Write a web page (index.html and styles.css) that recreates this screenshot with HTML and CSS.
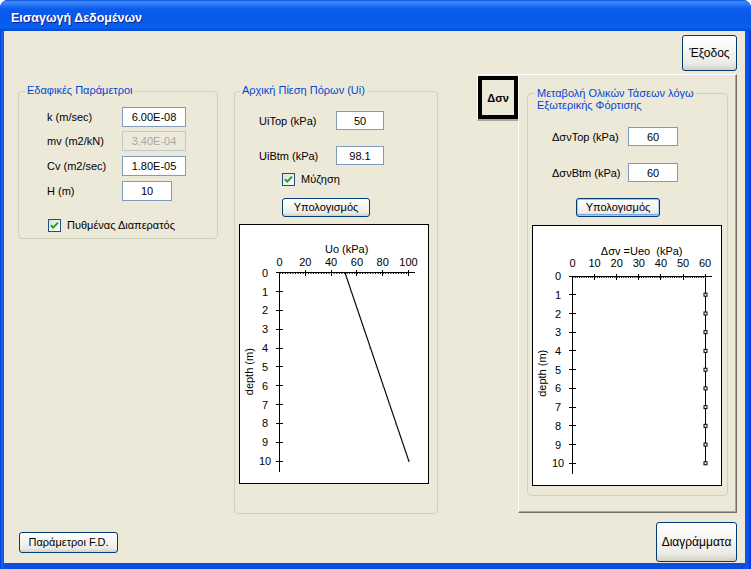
FILE: index.html
```html
<!DOCTYPE html>
<html lang="el">
<head>
<meta charset="utf-8">
<title>Εισαγωγή Δεδομένων</title>
<link rel="stylesheet" href="styles.css">
</head>
<body>
<div class="window">
  <div class="titlebar"><span class="title">Εισαγωγή Δεδομένων</span></div>
  <div class="client">

    <div class="col col1">
      <div class="group g1">
        <span class="legend">Εδαφικές Παράμετροι</span>
        <div class="frow"><span class="lbl">k (m/sec)</span><input class="inp w64" type="text" value="6.00E-08"></div>
        <div class="frow mt4"><span class="lbl">mv (m2/kN)</span><input class="inp w64" type="text" value="3.40E-04" disabled></div>
        <div class="frow mt5"><span class="lbl">Cv (m2/sec)</span><input class="inp w64" type="text" value="1.80E-05"></div>
        <div class="frow mt5"><span class="lbl">H (m)</span><input class="inp w50" type="text" value="10"></div>
        <label class="check c1"><span class="cb"><svg width="13" height="13" viewBox="0 0 13 13"><defs><linearGradient id="cbg" x1="0" y1="0" x2="1" y2="1"><stop offset="0" stop-color="#DCDCD7"/><stop offset="1" stop-color="#FFFFFF"/></linearGradient></defs><rect x="0.5" y="0.5" width="12" height="12" fill="url(#cbg)" stroke="#1C5180"/><path d="M3 6.2l2.2 2.4L10 3.6" fill="none" stroke="#21A121" stroke-width="2"/></svg></span>Πυθμένας Διαπερατός</label>
      </div>
      <button class="btn fd">Παράμετροι F.D.</button>
    </div>

    <div class="col col2">
      <div class="group g2">
        <span class="legend">Αρχική Πίεση Πόρων (Ui)</span>
        <div class="frow"><span class="lbl">UiTop (kPa)</span><input class="inp w48" type="text" value="50"></div>
        <div class="frow mt16"><span class="lbl">UiBtm (kPa)</span><input class="inp w48" type="text" value="98.1"></div>
        <label class="check c2"><span class="cb"><svg width="13" height="13" viewBox="0 0 13 13"><rect x="0.5" y="0.5" width="12" height="12" fill="url(#cbg)" stroke="#1C5180"/><path d="M3 6.2l2.2 2.4L10 3.6" fill="none" stroke="#21A121" stroke-width="2"/></svg></span>Μύζηση</label>
        <button class="btn calc calc1">Υπολογισμός</button>
        <svg class="chart chart1" width="188" height="258" viewBox="0 0 188 258">
          <text x="106.7" y="28" text-anchor="middle">Uo (kPa)</text>
          <g text-anchor="middle">
            <text x="39.5" y="40.7">0</text>
            <text x="65.3" y="40.7">20</text>
            <text x="91.1" y="40.7">40</text>
            <text x="116.9" y="40.7">60</text>
            <text x="142.7" y="40.7">80</text>
            <text x="168.5" y="40.7">100</text>
          </g>
          <g text-anchor="middle">
            <text x="25" y="51.7">0</text>
            <text x="25" y="70.5">1</text>
            <text x="25" y="89.4">2</text>
            <text x="25" y="108.2">3</text>
            <text x="25" y="127">4</text>
            <text x="25" y="145.9">5</text>
            <text x="25" y="164.7">6</text>
            <text x="25" y="183.5">7</text>
            <text x="25" y="202.3">8</text>
            <text x="25" y="221.2">9</text>
            <text x="25" y="240">10</text>
          </g>
          <text transform="translate(13 146.7) rotate(-90)" text-anchor="middle">depth (m)</text>
          <path class="ax" d="M39 47.5H175M39.5 47V247M65.5 45V51M91.5 45V51M116.5 45V51M142.5 45V51M168.5 45V51M36 47.5H43M36 66.5H43M36 85.5H43M36 104.5H43M36 123.5H43M36 141.5H43M36 160.5H43M36 179.5H43M36 198.5H43M36 217.5H43M36 236.5H43"/>
          <line class="minor" x1="39.5" y1="48.5" x2="168.5" y2="48.5" stroke-dasharray="1 1.58"/>
          <path class="data" d="M105 47.7L169 236.5"/>
          <path class="mark" d="M110.4 65.6l1.6 1.6m0-1.6l-1.6 1.6M116.8 84.5l1.6 1.6m0-1.6l-1.6 1.6M123.2 103.4l1.6 1.6m0-1.6l-1.6 1.6M129.6 122.2l1.6 1.6m0-1.6l-1.6 1.6M136 141.1l1.6 1.6m0-1.6l-1.6 1.6M142.4 160l1.6 1.6m0-1.6l-1.6 1.6M148.8 178.9l1.6 1.6m0-1.6l-1.6 1.6M155.2 197.8l1.6 1.6m0-1.6l-1.6 1.6M161.6 216.6l1.6 1.6m0-1.6l-1.6 1.6M168 235.5l1.6 1.6m0-1.6l-1.6 1.6"/>
        </svg>
      </div>
    </div>

    <div class="col col3">
      <button class="btn big exit">Έξοδος</button>
      <div class="tabrow">
        <div class="tab"><div class="dsbox">Δσν</div></div>
        <div class="panel">
          <div class="group g3">
            <span class="legend l3">Μεταβολή Ολικών Τάσεων λόγω<br>Εξωτερικής Φόρτισης</span>
            <div class="frow"><span class="lbl">ΔσνTop (kPa)</span><input class="inp w50" type="text" value="60"></div>
            <div class="frow mt17"><span class="lbl">ΔσνBtm (kPa)</span><input class="inp w50" type="text" value="60"></div>
            <button class="btn calc calc2">Υπολογισμός</button>
            <svg class="chart chart2" width="188" height="259" viewBox="0 0 188 259">
              <text x="108.7" y="28.7" text-anchor="middle" xml:space="preserve">Δσv =Ueo  (kPa)</text>
              <g text-anchor="middle">
                <text x="39.5" y="41.3">0</text>
                <text x="61.6" y="41.3">10</text>
                <text x="83.7" y="41.3">20</text>
                <text x="105.8" y="41.3">30</text>
                <text x="127.9" y="41.3">40</text>
                <text x="150" y="41.3">50</text>
                <text x="172.1" y="41.3">60</text>
              </g>
              <g text-anchor="middle">
                <text x="25" y="54">0</text>
                <text x="25" y="72.7">1</text>
                <text x="25" y="91.5">2</text>
                <text x="25" y="110.2">3</text>
                <text x="25" y="128.9">4</text>
                <text x="25" y="147.7">5</text>
                <text x="25" y="166.4">6</text>
                <text x="25" y="185.1">7</text>
                <text x="25" y="203.8">8</text>
                <text x="25" y="222.6">9</text>
                <text x="25" y="241.3">10</text>
              </g>
              <text transform="translate(12.7 147.3) rotate(-90)" text-anchor="middle">depth (m)</text>
              <path class="ax" d="M39 50.5H179M39.5 50V248M61.5 48V54M83.5 48V54M105.5 48V54M127.5 48V54M150.5 48V54M172.5 48V54M36 50.5H43M36 68.5H43M36 87.5H43M36 106.5H43M36 124.5H43M36 143.5H43M36 162.5H43M36 181.5H43M36 199.5H43M36 218.5H43M36 237.5H43"/>
              <line class="minor" x1="39.5" y1="51.5" x2="172.5" y2="51.5" stroke-dasharray="1 1.21"/>
              <path class="data2" d="M172.5 50V237.5"/>
              <g class="sq">
                <rect x="171" y="67.2" width="3" height="3"/>
                <rect x="171" y="86" width="3" height="3"/>
                <rect x="171" y="104.7" width="3" height="3"/>
                <rect x="171" y="123.4" width="3" height="3"/>
                <rect x="171" y="142.2" width="3" height="3"/>
                <rect x="171" y="160.9" width="3" height="3"/>
                <rect x="171" y="179.6" width="3" height="3"/>
                <rect x="171" y="198.3" width="3" height="3"/>
                <rect x="171" y="217.1" width="3" height="3"/>
                <rect x="171" y="235.8" width="3" height="3"/>
              </g>
            </svg>
          </div>
        </div>
      </div>
      <button class="btn big diag">Διαγράμματα</button>
    </div>

  </div>
</div>
</body>
</html>
```
FILE: styles.css
```css
* { box-sizing: border-box; }
html, body { margin: 0; padding: 0; background: #ffffff; }
body {
  font-family: "Liberation Sans", Arial, sans-serif;
  font-size: 11px;
  color: #000;
}

.window {
  width: 751px;
  height: 569px;
  background: linear-gradient(to right, #0831D9 0, #166AEE 2px, #0A4FE0 4px, #0A4FE0 745px, #0A5BEF 747px, #0831D9 751px);
  border-radius: 8px 8px 0 0;
  display: flex;
  flex-direction: column;
  overflow: hidden;
}

.titlebar {
  height: 31px;
  flex: none;
  padding: 11px 0 0 11px;
  background: linear-gradient(to bottom, #0A52E0 0, #3C8DF8 2px, #2F7CF5 4px, #0C5BEC 9px, #0558E8 20px, #0A60EE 27px, #0049D4 31px);
}
.title {
  display: block;
  color: #fff;
  font-weight: bold;
  font-size: 12.5px;
  line-height: 15px;
  text-shadow: 1px 1px 0 #0F1E8C;
}

.client {
  flex: none;
  width: 741px;
  height: 532px;
  margin-left: 4px;
  background: #ECE9D8;
  display: flex;
}

.col { display: flex; flex-direction: column; }
.col1 { width: 200px; margin-left: 14px; }
.col2 { width: 204px; margin-left: 16px; }
.col3 { width: 260px; margin-left: 39px; }

.group {
  position: relative;
  border: 1px solid #D0D0BF;
  border-radius: 4px;
  display: flex;
  flex-direction: column;
  align-items: flex-start;
}
.legend {
  position: absolute;
  top: -8px;
  left: 6px;
  padding: 0 2px;
  background: #ECE9D8;
  color: #0046D5;
  line-height: 13px;
  white-space: nowrap;
}

.g1 { margin-top: 60px; height: 148px; padding: 15px 0 0 28px; }
.g2 { margin-top: 60px; height: 423px; padding: 19px 0 0 24px; }
.g2 .legend { left: 5px; }
.g3 { margin: 18px 0 0 8px; width: 201px; height: 403px; padding: 33px 0 0 24px; }
.l3 { top: -7px; left: 7px; line-height: 12px; }

.frow { display: flex; align-items: center; }
.g1 .lbl { width: 75px; }
.g2 .lbl { width: 77px; }
.g3 .lbl { width: 76px; }
.mt4 { margin-top: 4px; }
.mt5 { margin-top: 5px; }
.mt16 { margin-top: 16px; }
.mt17 { margin-top: 17px; }

.inp {
  height: 20px;
  border: 1px solid #7F9DB9;
  background: #fff;
  font-family: "Liberation Sans", Arial, sans-serif;
  font-size: 11px;
  color: #000;
  text-align: center;
  padding: 0;
  margin: 0;
  outline: none;
}
.g2 .inp, .g3 .inp { height: 19px; }
.inp:disabled { background: #EBEADB; color: #ACA899; border-color: #C2C7CF; }
.w64 { width: 64px; }
.w50 { width: 50px; }
.w48 { width: 48px; }

.check { display: flex; align-items: center; line-height: 13px; }
.cb { display: block; width: 13px; height: 13px; margin-right: 6px; }
.cb svg { display: block; }
.c1 { margin: 18px 0 0 1px; }
.c2 { margin: 8px 0 0 23px; }

.btn {
  font-family: "Liberation Sans", Arial, sans-serif;
  font-size: 11px;
  color: #000;
  border: 1px solid #003C74;
  border-radius: 3px;
  background: linear-gradient(to bottom, #FFFFFF 0, #F7F6F2 40%, #ECEBE6 80%, #D6D0C5 100%);
  padding: 0;
  margin: 0;
  line-height: 13px;
}
.fd { width: 99px; height: 21px; margin: auto 0 10px 1px; }
.calc { height: 19px; }
.calc1 { width: 88px; margin: 12px 0 0 23px; }
.calc2 { width: 84px; margin: 16px 0 0 24px; box-shadow: inset 0 0 0 1px #A9C4F3, inset 0 -1px 0 1px #7EA2EA; }
.big { font-size: 12px; }
.exit { width: 55px; height: 36px; margin-top: 4px; align-self: flex-end; }
.diag { width: 81px; height: 40px; margin-top: 9px; align-self: flex-end; }

.tabrow { display: flex; align-items: flex-start; margin-top: 3px; height: 439px; }
.tab {
  width: 41px;
  border-top: 1px solid #FFFFFF;
  border-left: 1px solid #FFFFFF;
  border-bottom: 2px solid #ACA899;
  padding-top: 1px;
}
.dsbox {
  width: 40px;
  height: 43px;
  border: 4px solid #000;
  display: flex;
  align-items: center;
  justify-content: center;
  font-weight: bold;
  font-size: 11px;
}
.panel {
  width: 219px;
  height: 439px;
  border-top: 1px solid #FFFFFF;
  border-left: 1px solid #FFFFFF;
  border-right: 1px solid #716F64;
  border-bottom: 1px solid #716F64;
  box-shadow: inset -1px -1px 0 #ACA899;
}

.chart {
  display: block;
  background: #fff;
  border: 1px solid #000;
  box-sizing: content-box;
}
.chart1 { margin: 7px 0 0 -20px; }
.chart2 { margin: 8px 0 0 -20px; }
.chart text {
  font-family: "Liberation Sans", Arial, sans-serif;
  font-size: 11px;
  fill: #000;
}
.ax { fill: none; stroke: #000; stroke-width: 1; }
.minor { stroke: #000; stroke-width: 1; }
.data { fill: none; stroke: #000; stroke-width: 1.1; }
.data2 { fill: none; stroke: #000; stroke-width: 1; }
.mark { fill: none; stroke: #555; stroke-width: 0.8; }
.sq rect { fill: #fff; stroke: #000; stroke-width: 1; }
```
